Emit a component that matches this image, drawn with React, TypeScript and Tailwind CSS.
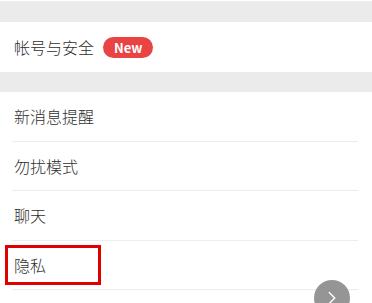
import { ChevronRight } from 'lucide-react';

const items = ['新消息提醒', '勿扰模式', '聊天', '隐私'];

export default function App() {
  return (
    <div
      className="relative w-[372px] h-[303px] overflow-hidden bg-white text-[#2e2e2e]"
      style={{ fontFamily: '"Noto Sans CJK SC", "Noto Sans", sans-serif' }}
    >
      <div className="h-px bg-white" />
      <div className="h-[21px] bg-[#ebebeb]" />
      <div className="h-[50px] flex items-center pl-[14px] gap-[9px]">
        <span className="text-[16px] leading-none font-light">帐号与安全</span>
        <span className="h-[21px] px-[11px] rounded-full bg-[#e94343] text-white text-[13px] font-bold flex items-center leading-none">
          New
        </span>
      </div>
      <div className="h-[20px] bg-[#ebebeb]" />
      <div className="pl-[12px] pr-[14px]">
        {items.map((label) => (
          <div key={label} className="h-[49.5px] border-b border-[#ededed] flex items-center">
            {label === '隐私' ? (
              <span className="-ml-[7px] w-[96px] h-[40px] border-[3px] border-[#e00000] flex items-center pl-[6px] text-[16px] leading-none font-light">
                {label}
              </span>
            ) : (
              <span className="pl-[2px] text-[16px] leading-none font-light">{label}</span>
            )}
          </div>
        ))}
      </div>
      <div className="absolute left-[314px] top-[280px] w-[36px] h-[36px] rounded-full bg-[#8a8a8a]/90 flex items-center justify-center">
        <ChevronRight size={22} color="white" strokeWidth={1.5} />
      </div>
    </div>
  );
}
